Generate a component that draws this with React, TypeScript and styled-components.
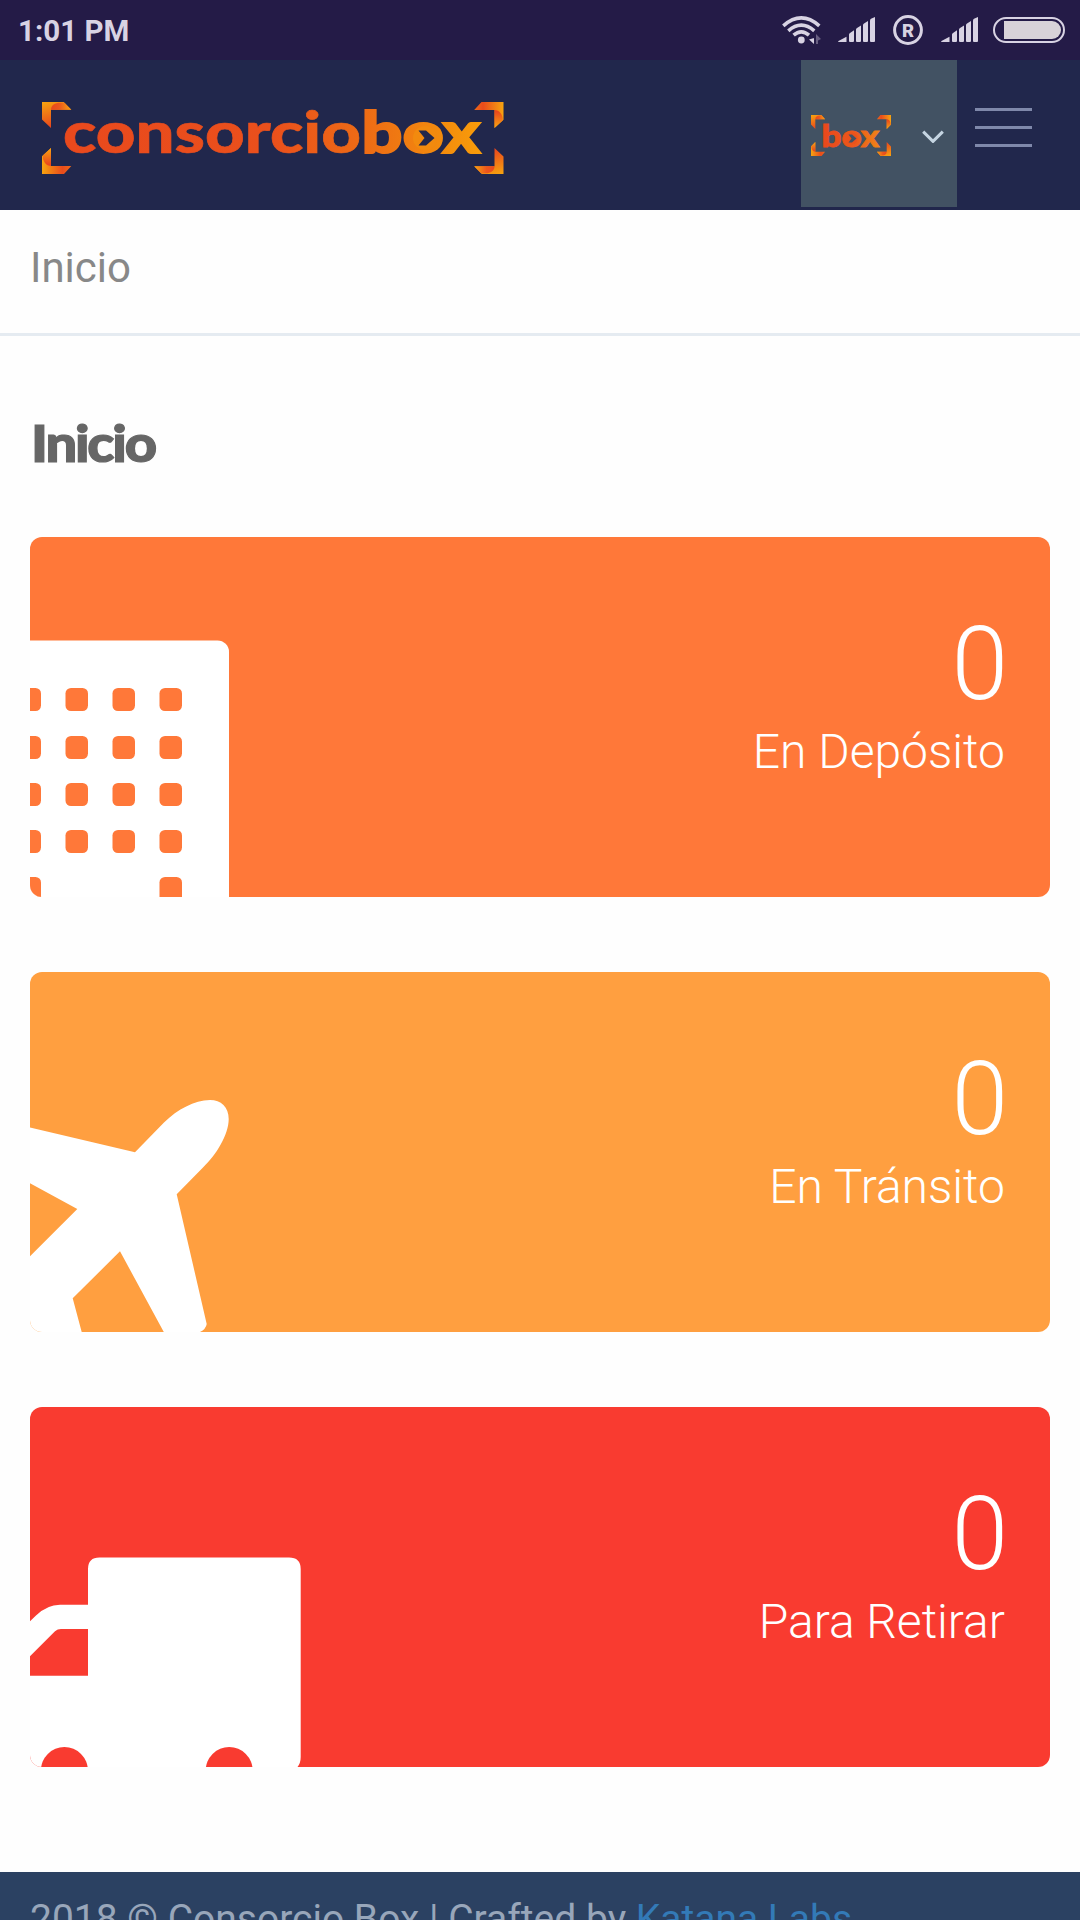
import React from "react";
import styled, { createGlobalStyle } from "styled-components";

const GlobalStyle = createGlobalStyle`
  * { box-sizing: border-box; }
  html, body { margin: 0; padding: 0; background: #fefefe; }
  body { font-family: Roboto, "Liberation Sans", sans-serif; overflow: hidden; }
  svg { display: block; flex: none; }
`;

const Screen = styled.div`
  width: 1080px;
  height: 1920px;
  overflow: hidden;
  display: flex;
  flex-direction: column;
  background: #fefefe;
`;

const StatusBar = styled.div`
  flex: none;
  height: 60px;
  padding: 0 15px 0 18px;
  display: flex;
  align-items: center;
  justify-content: space-between;
  background: #241b47;
  color: #d8d3e3;
`;

const Clock = styled.span`
  font-size: 29.5px;
  line-height: 34px;
  font-weight: 700;
  padding-top: 1px;
`;

const StatusIcons = styled.div`
  display: flex;
  align-items: center;
  gap: 14px;
`;

const Header = styled.header`
  flex: none;
  height: 150px;
  padding: 0 48px 0 42px;
  display: flex;
  align-items: flex-start;
  background: #21274c;
`;

const Brand = styled.a`
  margin-top: 42px;
  margin-right: auto;
`;

const AccountToggle = styled.button`
  width: 156px;
  height: 147px;
  margin: 0 18px 0 0;
  padding: 4px 13px 0 10px;
  border: 0;
  display: flex;
  align-items: center;
  justify-content: space-between;
  background: #425263;
`;

const MenuButton = styled.button`
  width: 57px;
  margin: 48px 0 0;
  padding: 0;
  border: 0;
  background: none;
  display: flex;
  flex-direction: column;
  gap: 15px;
`;

const MenuLine = styled.span`
  height: 3px;
  background: #7f88aa;
`;

const Breadcrumb = styled.nav`
  flex: none;
  height: 126px;
  padding: 33px 30px 0;
  border-bottom: 3px solid #e5ebf1;
  color: #888;
  font-size: 42px;
  line-height: 50px;
`;

const Content = styled.main`
  flex: none;
  height: 1536px;
  padding: 79px 30px 0;
`;

const Title = styled.h1`
  margin: 0 0 62px;
  height: 60px;
  font-family: Lato, "Liberation Sans", sans-serif;
  font-size: 51px;
  line-height: 56px;
  font-weight: 900;
  letter-spacing: -2px;
  -webkit-text-stroke: 1.2px #666;
  transform: translateX(1px) scaleX(1.1);
  transform-origin: left center;
  color: #666;
`;

const Cards = styled.div`
  display: flex;
  flex-direction: column;
  gap: 75px;
`;

const Card = styled.section<{ $color: string }>`
  height: 360px;
  border-radius: 12px;
  overflow: hidden;
  display: flex;
  justify-content: space-between;
  background: ${(p) => p.$color};
  color: #fff;
`;

const CardText = styled.div`
  padding: 76px 45px 0 0;
  text-align: right;
  font-weight: 300;
`;

const Count = styled.div`
  font-size: 102px;
  line-height: 102px;
  letter-spacing: -3px;
  margin-bottom: 13px;
`;

const Label = styled.div`
  font-size: 48px;
  line-height: 48px;
  white-space: nowrap;
`;

const Footer = styled.footer`
  flex: none;
  height: 90px;
  padding: 24px 30px 0;
  background: #2b4162;
  color: #98a6ba;
  font-size: 39px;
  line-height: 46px;
  white-space: nowrap;
`;

const FooterLink = styled.a`
  color: #337ab7;
`;

const Wifi = () => (
  <svg width="42" height="28" viewBox="0 0 42 28" fill="none" stroke="#d8d3e3" strokeWidth="3.6">
    <path d="M1.3 9.8Q19.3-6 37.3 9.8" />
    <path d="M6.3 14.8Q19.3 3.6 32.3 14.8" />
    <path d="M11.6 19.2Q19.3 12.4 27 19.2" />
    <circle cx="19.3" cy="24" r="3.4" fill="#d8d3e3" stroke="none" />
    <path d="M32 18V28L27 23.5L32 22Z" fill="#d8d3e3" stroke="none" />
    <path d="M34 18V28H36V24.5L39 23Z" fill="#685f82" stroke="none" />
  </svg>
);

const Signal = ({ width }: { width: number }) => (
  <svg width={width} height="26" viewBox={`0 0 ${width} 26`} fill="#d8d3e3">
    <path d="M0 24.2L8.5 19.8V25H1Q0 25 0 24.2Z" />
    <path d="M11 17.5Q11 16.5 12 16L16 13.2V24Q16 25 15 25H12Q11 25 11 24Z" />
    <path d="M18 12.5Q18 11.5 19 11L23 8.5V24Q23 25 22 25H19Q18 25 18 24Z" />
    <path d="M25 8Q25 7 26 6.5L30 4V24Q30 25 29 25H26Q25 25 25 24Z" />
    <path d="M32 3.5Q32 2.3 33 1.8L37 0V24Q37 25 36 25H33Q32 25 32 24Z" />
  </svg>
);

const Registered = () => (
  <svg width="34" height="30" viewBox="0 0 34 30">
    <circle cx="15" cy="15" r="13.4" fill="none" stroke="#d8d3e3" strokeWidth="3" />
    <text x="15" y="21.5" textAnchor="middle" fontFamily="Roboto, sans-serif" fontWeight="900" fontSize="18.5" fill="#d8d3e3">R</text>
  </svg>
);

const Battery = () => (
  <svg width="72" height="26" viewBox="0 0 72 26">
    <rect x="1" y="1" width="70" height="24" rx="12" fill="none" stroke="#d8d3e3" strokeWidth="2" />
    <path d="M11 4H59A9 9 0 0 1 59 22H11Z" fill="#d8d3d8" />
  </svg>
);

const CornerDefs = ({ id }: { id: string }) => (
  <defs>
    <linearGradient id={id + "v"} x1="0" y1="0" x2="0.3" y2="1">
      <stop offset="0" stopColor="#f7a40f" />
      <stop offset="1" stopColor="#e8431d" />
    </linearGradient>
    <linearGradient id={id + "h"}>
      <stop offset="0" stopColor="#e9481c" />
      <stop offset="0.4" stopColor="#ec561d" />
      <stop offset="1" stopColor="#f8a511" />
    </linearGradient>
    <linearGradient id={id + "b"}>
      <stop offset="0" stopColor="#f7a40f" />
      <stop offset="0.7" stopColor="#e94b1c" />
      <stop offset="1" stopColor="#ee6a18" />
    </linearGradient>
    <linearGradient id={id + "f"} x1="0" y1="0" x2="0" y2="1">
      <stop offset="0" stopColor="#f8a511" />
      <stop offset="0.9" stopColor="#e9481c" />
    </linearGradient>
    <g id={id + "A"}>
      <path d="M0 0H21.7L29.3 7.8H9V26L0 17.5Z" fill={`url(#${id}v)`} />
      <path d="M9 7.8C9 3 13 .8 18 .8L22.5 .8L29.3 7.8Z" fill={`url(#${id}h)`} />
    </g>
    <g id={id + "B"}>
      <path d="M0 8.3L9 0V18H29.3L22 26H0Z" fill={`url(#${id}b)`} />
      <path d="M.8 7.6L9 0V18C4 18 .8 13 .8 9Z" fill={`url(#${id}f)`} />
    </g>
  </defs>
);

const BrandLogo = () => (
  <svg width="462" height="72" viewBox="0 0 462 72">
    <CornerDefs id="lg" />
    <defs>
      <linearGradient id="word" gradientUnits="userSpaceOnUse" x1="23" y1="0" x2="440" y2="0">
        <stop offset="0" stopColor="#e9491d" />
        <stop offset="0.5" stopColor="#ea501c" />
        <stop offset="0.75" stopColor="#ee7014" />
        <stop offset="0.9" stopColor="#f38b0d" />
        <stop offset="1" stopColor="#f99d0a" />
      </linearGradient>
    </defs>
    <use href="#lgA" />
    <use href="#lgB" y="46" />
    <use href="#lgA" transform="translate(461.5 72) rotate(180)" />
    <use href="#lgB" transform="translate(461.5 26) rotate(180)" />
    <g fontFamily="Lato, sans-serif" fontSize="58" fontWeight="900" fill="url(#word)" stroke="url(#word)">
      <text x="21" y="51" strokeWidth="0.6" textLength="298" lengthAdjust="spacingAndGlyphs">consorcio</text>
      <text x="319.5" y="51" strokeWidth="1.8" textLength="119" lengthAdjust="spacingAndGlyphs">box</text>
    </g>
    <circle cx="383" cy="36" r="12" fill="#f28a0e" />
    <path d="M376.5 28.5H384L392.5 36L384 43.5H376.5L382.5 36Z" fill="#21274c" />
  </svg>
);

const SmallLogo = () => (
  <svg width="80" height="41" viewBox="0 0 80 41">
    <CornerDefs id="sm" />
    <defs>
      <linearGradient id="smword" gradientUnits="userSpaceOnUse" x1="12" y1="0" x2="68" y2="0">
        <stop offset="0" stopColor="#e9481c" />
        <stop offset="0.6" stopColor="#ec5a1b" />
        <stop offset="1" stopColor="#f08416" />
      </linearGradient>
    </defs>
    <use href="#smA" transform="scale(.48 .54)" />
    <use href="#smB" transform="translate(0 27) scale(.48 .54)" />
    <use href="#smA" transform="translate(80 41) rotate(180) scale(.48 .54)" />
    <use href="#smB" transform="translate(80 14) rotate(180) scale(.48 .54)" />
    <text x="10.5" y="31.5" fontFamily="Lato, sans-serif" fontSize="31" fontWeight="900" fill="url(#smword)" stroke="url(#smword)" strokeWidth=".8" textLength="58" lengthAdjust="spacingAndGlyphs">box</text>
    <circle cx="40.5" cy="23.5" r="6" fill="#eb521c" />
    <path d="M37.5 19.5H41L45.5 23.5L41 27.5H37.5L40.5 23.5Z" fill="#425263" />
  </svg>
);

const ChevronDown = () => (
  <svg width="22" height="14" viewBox="0 0 22 14" fill="none" stroke="#c5d5e2" strokeWidth="3">
    <path d="M1.2 2.6L11 12.4L20.8 2.6" />
  </svg>
);

const windowColumns = [-11.5, 35.5, 82.5, 129.5];
const windowRows = [151, 199, 246, 293];

const BuildingIcon = () => (
  <svg width="300" height="360" viewBox="0 0 300 360">
    <path d="M0 103.5H187.5A11.5 11.5 0 0 1 199 115V360H0Z" fill="#fff" />
    <g fill="#ff7839">
      {windowRows.map((y) => windowColumns.map((x) => <rect key={`${x}-${y}`} x={x} y={y} width="22.5" height="23" rx="5.5" />))}
      <rect x="-11.5" y="340" width="22.5" height="40" rx="5.5" />
      <rect x="129.5" y="340" width="22.5" height="40" rx="5.5" />
    </g>
  </svg>
);

const PlaneIcon = () => (
  <svg width="300" height="360" viewBox="0 0 300 360" fill="#fff">
    <path d="M0 155.5L105 180.3L134 150.5C148 137 164 128.5 180 128C191 128 198.7 135 198.7 147C198.7 163 186 183 173 195.5L146.7 222.3L176.7 352Q176 357 170 360H133.8L90 279.3L42.7 326.3L51.7 360H0V284.3L47.3 237L0 211.3Z" />
  </svg>
);

const TruckIcon = () => (
  <svg width="300" height="360" viewBox="0 0 300 360">
    <path
      fill="#fff"
      d="M0 214.3L6 208.5Q17 197.7 30 197.7H58V162Q58 150.5 69.5 150.5H259Q270.7 150.5 270.7 162V350Q270.7 356 267.5 360H0V268.7H58V222H31Q27.5 222 25 224.3L0 249.3Z"
    />
    <circle cx="34.4" cy="363.5" r="23.5" fill="#f93b30" />
    <circle cx="199.2" cy="363.5" r="23.5" fill="#f93b30" />
  </svg>
);

const cards = [
  { label: "En Depósito", count: 0, color: "#ff7839", Icon: BuildingIcon },
  { label: "En Tránsito", count: 0, color: "#ff9f40", Icon: PlaneIcon },
  { label: "Para Retirar", count: 0, color: "#f93b30", Icon: TruckIcon },
];

export default function App() {
  return (
    <Screen>
      <GlobalStyle />
      <StatusBar>
        <Clock>1:01 PM</Clock>
        <StatusIcons>
          <Wifi />
          <Signal width={41} />
          <Registered />
          <Signal width={38} />
          <Battery />
        </StatusIcons>
      </StatusBar>
      <Header>
        <Brand>
          <BrandLogo />
        </Brand>
        <AccountToggle>
          <SmallLogo />
          <ChevronDown />
        </AccountToggle>
        <MenuButton>
          <MenuLine />
          <MenuLine />
          <MenuLine />
        </MenuButton>
      </Header>
      <Breadcrumb>Inicio</Breadcrumb>
      <Content>
        <Title>Inicio</Title>
        <Cards>
          {cards.map(({ label, count, color, Icon }) => (
            <Card key={label} $color={color}>
              <Icon />
              <CardText>
                <Count>{count}</Count>
                <Label>{label}</Label>
              </CardText>
            </Card>
          ))}
        </Cards>
      </Content>
      <Footer>
        2018 © Consorcio Box | Crafted by <FooterLink>Katana Labs</FooterLink>
      </Footer>
    </Screen>
  );
}
